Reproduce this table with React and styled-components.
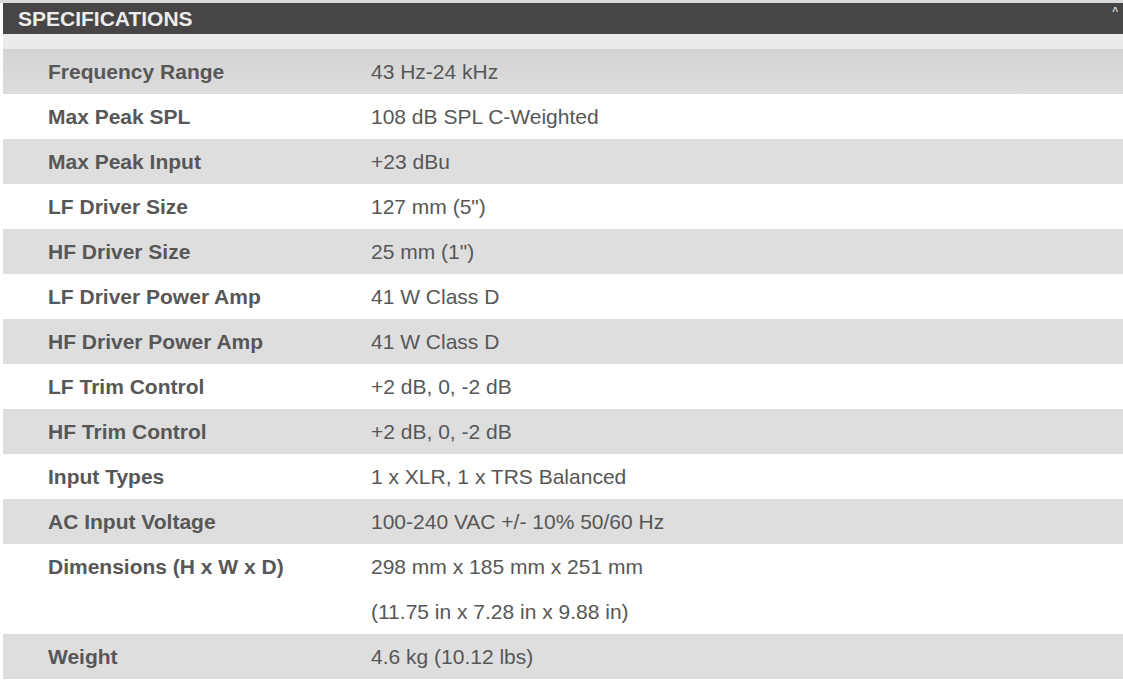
import React from "react";
import styled, { createGlobalStyle } from "styled-components";

const GlobalStyle = createGlobalStyle`
  html, body {
    margin: 0;
    padding: 0;
    background: #ffffff;
  }
  body {
    font-family: "Liberation Sans", Arial, sans-serif;
  }
`;

const specs = [
  ["Frequency Range", ["43 Hz-24 kHz"]],
  ["Max Peak SPL", ["108 dB SPL C-Weighted"]],
  ["Max Peak Input", ["+23 dBu"]],
  ["LF Driver Size", ["127 mm (5\")"]],
  ["HF Driver Size", ["25 mm (1\")"]],
  ["LF Driver Power Amp", ["41 W Class D"]],
  ["HF Driver Power Amp", ["41 W Class D"]],
  ["LF Trim Control", ["+2 dB, 0, -2 dB"]],
  ["HF Trim Control", ["+2 dB, 0, -2 dB"]],
  ["Input Types", ["1 x XLR, 1 x TRS Balanced"]],
  ["AC Input Voltage", ["100-240 VAC +/- 10% 50/60 Hz"]],
  ["Dimensions (H x W x D)", ["298 mm x 185 mm x 251 mm", "(11.75 in x 7.28 in x 9.88 in)"]],
  ["Weight", ["4.6 kg (10.12 lbs)"]],
];

const Page = styled.div`
  width: 1123px;
  height: 683px;
  overflow: hidden;
  padding-left: 3px;
  box-sizing: border-box;
  background: #ffffff;
`;

const TopStrip = styled.div`
  height: 3px;
  margin-left: -3px;
  background: #dadada;
`;

const Header = styled.div`
  position: relative;
  height: 31px;
  background: #474545;
  display: flex;
  align-items: center;
  padding-left: 15px;
`;

const Title = styled.h2`
  margin: 0;
  font-size: 21px;
  font-weight: 700;
  color: #ececec;
`;

const Caret = styled.span`
  position: absolute;
  right: 5px;
  top: 3px;
  font-size: 10px;
  font-weight: 700;
  color: #dddddd;
`;

const Band = styled.div`
  height: 15px;
  background: #eaeaea;
`;

const Table = styled.div`
  display: flex;
  flex-direction: column;
`;

const Row = styled.div`
  display: grid;
  grid-template-columns: 323px 1fr;
  padding-left: 45px;
  background: ${(p) => (p.$shaded ? "#dedede" : "#ffffff")};
  ${(p) => p.$first && "background: linear-gradient(#d3d3d3, #dddddd);"}
`;

const Label = styled.div`
  font-size: 21px;
  font-weight: 700;
  color: #575757;
  line-height: 45px;
  white-space: nowrap;
`;

const Values = styled.div`
  display: flex;
  flex-direction: column;
`;

const Value = styled.div`
  font-size: 21px;
  color: #575757;
  line-height: 45px;
  white-space: nowrap;
`;

export default function App() {
  return (
    <>
      <GlobalStyle />
      <Page>
        <TopStrip />
        <Header>
          <Title>SPECIFICATIONS</Title>
          <Caret>^</Caret>
        </Header>
        <Band />
        <Table>
          {specs.map(([label, values], i) => (
            <Row key={label} $shaded={i % 2 === 0} $first={i === 0}>
              <Label>{label}</Label>
              <Values>
                {values.map((v) => (
                  <Value key={v}>{v}</Value>
                ))}
              </Values>
            </Row>
          ))}
        </Table>
      </Page>
    </>
  );
}
